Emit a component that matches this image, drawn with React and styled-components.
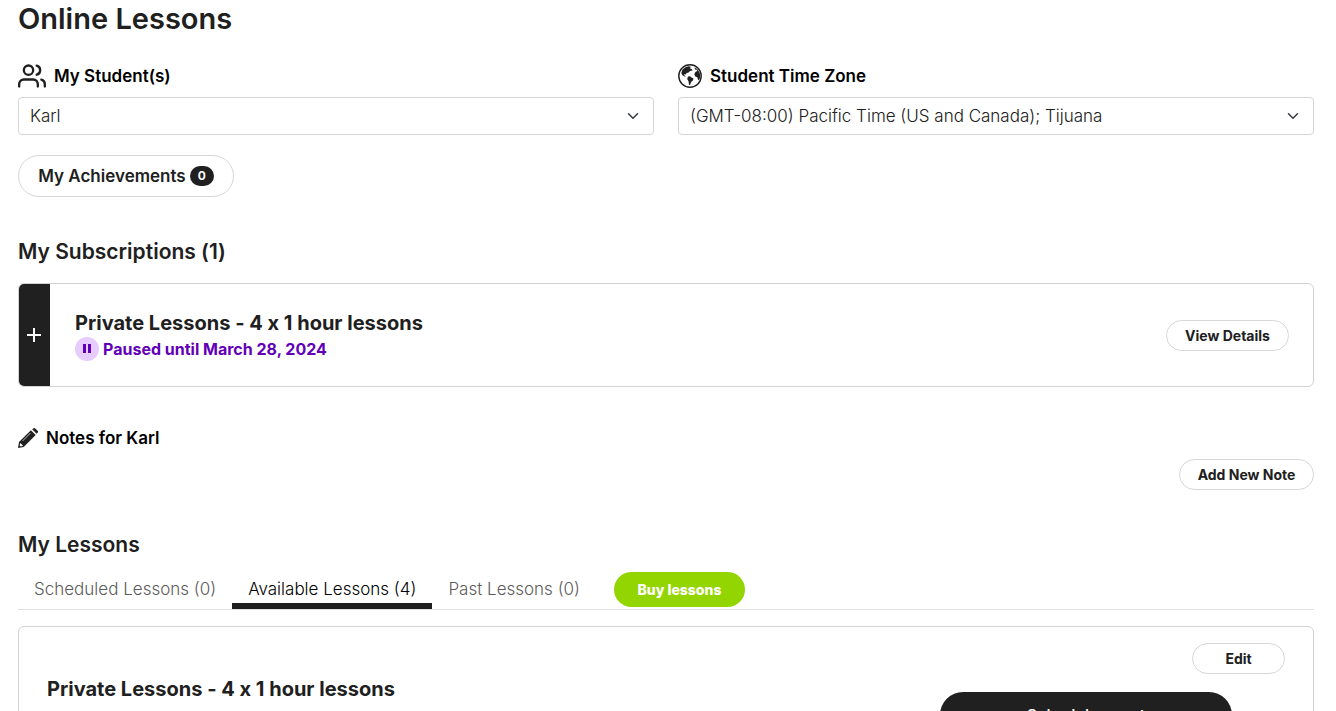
import React from 'react';
import styled, { createGlobalStyle, css } from 'styled-components';
import { FiUsers } from 'react-icons/fi';

const GlobalStyle = createGlobalStyle`
  * {
    box-sizing: border-box;
  }

  body {
    margin: 0;
    background: #fff;
    color: #202020;
    font-family: Inter, "Open Sans", sans-serif;
    font-size: 17px;
    font-weight: 300;
    font-feature-settings: "calt" 0;
    line-height: 24px;
    overflow-x: hidden;
  }

  button, select {
    font-family: inherit;
  }
`;

const Page = styled.main`
  padding: 0 22px 40px 18px;
`;

const PageTitle = styled.h1`
  margin: 0 0 24px;
  font-size: 29px;
  font-weight: 600;
  line-height: 38px;
`;

const SectionTitle = styled.h2`
  margin: 0;
  font-size: 21px;
  font-weight: 600;
  line-height: 28px;
`;

const Filters = styled.div`
  display: grid;
  grid-template-columns: 1fr 1fr;
  gap: 24px;
  margin-bottom: 20px;
`;

const IconLabel = styled.label`
  display: flex;
  align-items: center;
  gap: 8px;
  height: 28px;
  margin: 0 0 7px;
  color: #000;
  font-size: 17px;
  font-weight: 600;

  svg {
    color: #202020;
  }
`;

const SelectBox = styled.div`
  display: grid;
  align-items: center;

  > * {
    grid-area: 1 / 1;
  }

  svg {
    justify-self: end;
    margin-right: 15px;
    color: #343a40;
    pointer-events: none;
  }
`;

const Select = styled.select`
  appearance: none;
  width: 100%;
  height: 38px;
  padding: 0 36px 0 11px;
  border: 1px solid #d3d5d7;
  border-radius: 4px;
  background: #fff;
  color: #202020;
  font-size: 17px;
  font-weight: 300;
`;

const PillButton = styled.button`
  display: inline-flex;
  align-items: center;
  justify-content: center;
  gap: 4px;
  height: 31px;
  min-width: ${({ $width }) => $width || 0}px;
  padding: 0 16px;
  border: 1px solid #d5d7d9;
  border-radius: 24px;
  background: #fff;
  color: #202020;
  font-size: 14px;
  font-weight: 700;
  white-space: nowrap;
  cursor: pointer;

  ${({ $large }) =>
    $large &&
    css`
      height: 42px;
      font-size: 17px;
      font-weight: 600;
    `}
`;

const Badge = styled.span`
  padding: 0 8px;
  border-radius: 10px;
  background: #202020;
  color: #fff;
  font-size: 12px;
  font-weight: 700;
  line-height: 20px;
`;

const Subscriptions = styled.section`
  margin-top: 41px;
`;

const SubscriptionCard = styled.article`
  display: flex;
  align-items: center;
  height: 104px;
  margin-top: 17px;
  padding-right: 24px;
  border: 1px solid #d0d2d4;
  border-radius: 6px;
  overflow: hidden;
`;

const Expand = styled.button`
  display: flex;
  align-items: center;
  justify-content: center;
  align-self: stretch;
  width: 31px;
  padding: 0;
  border: 0;
  background: #202020;
  color: #fff;
  cursor: pointer;
`;

const SubscriptionInfo = styled.div`
  flex: 1;
  padding: 0 25px;
`;

const CardTitle = styled.h3`
  margin: 0;
  font-size: 20px;
  font-weight: 700;
  line-height: 28px;
`;

const Status = styled.p`
  display: flex;
  align-items: center;
  gap: 4px;
  margin: 0;
  color: #6200b8;
  font-size: 16px;
  font-weight: 700;
`;

const Notes = styled.section`
  display: flex;
  flex-direction: column;
  align-items: flex-end;
  margin-top: 37px;
`;

const NotesTitle = styled(IconLabel)`
  align-self: stretch;
`;

const Lessons = styled.section`
  margin-top: 41px;
`;

const Tabs = styled.div`
  display: flex;
  align-items: flex-end;
  height: 42px;
  margin: 9px 0 16px;
  border-bottom: 1px solid #dee0e2;
`;

const Tab = styled.button`
  height: 41px;
  padding: 6px 16px 0;
  border: 0;
  border-bottom: 6px solid ${({ $active }) => ($active ? '#202020' : 'transparent')};
  background: none;
  color: ${({ $active }) => ($active ? '#000' : '#5c5c5c')};
  font-size: 17px;
  font-weight: 300;
  white-space: nowrap;
  cursor: pointer;
`;

const BuyButton = styled.button`
  height: 35px;
  min-width: 131px;
  margin: 0 0 2px 18px;
  padding: 0 20px;
  border: 0;
  border-radius: 18px;
  background: #93d500;
  color: #fff;
  font-size: 14px;
  font-weight: 800;
  white-space: nowrap;
  cursor: pointer;
`;

const LessonCard = styled.article`
  display: flex;
  align-items: flex-start;
  justify-content: space-between;
  padding: 16px 28px 32px;
  border: 1px solid #d0d2d4;
  border-radius: 6px;
`;

const LessonInfo = styled.div`
  padding-top: 32px;
`;

const LessonActions = styled.div`
  display: flex;
  flex-direction: column;
  align-items: flex-end;
  gap: 18px;
`;

const ScheduleButton = styled.button`
  width: 292px;
  height: 46px;
  margin-right: 53px;
  border: 0;
  border-radius: 24px;
  background: #202020;
  color: #fff;
  font-size: 16px;
  font-weight: 500;
  cursor: pointer;
`;

const ChevronIcon = () => (
  <svg width="12" height="12" viewBox="0 0 16 16" fill="none" stroke="currentColor" strokeWidth="2" strokeLinecap="round" strokeLinejoin="round">
    <path d="m2 5 6 6 6-6" />
  </svg>
);

const GlobeIcon = () => (
  <svg width="24" height="24" viewBox="0 0 24 24" fill="currentColor">
    <circle cx="12" cy="12" r="11.2" fill="none" stroke="currentColor" strokeWidth="1.4" />
    <path d="M4.500 5.500 7.500 3.200l3-.9 2.500.4-1.300 1.600 2.100.7.700 1.500-2.500.6-1.400 1.500-2 .4-.7 1.400-1.300-.4-.6 1 1.500 1.200-.5.500-2.600-1.400L3.300 9z" />
    <path d="m10 12.600 2-.3 1.500 1.100 2 1-.6 2-1.600 1.400-1.200 2.900-1.100.3-.4-3.600-1.400-2.300z" />
    <path d="m16.500 3.400 2.500 1.400 2.600 3.600.7 3.500-.7 3.400-1.400.9-.9-3-2-.7-1-2.300 1.100-2.200 1.900-.9-.5-1.300-1.800-.3z" />
  </svg>
);

const PencilIcon = () => (
  <svg width="20" height="20" viewBox="0 0 20 20" fill="currentColor">
    <path d="M14.200 1.300 15.300.4a1.400 1.400 0 0 1 1.900 0l2.400 2.400a1.400 1.400 0 0 1 0 1.900l-1.100 1z" />
    <path d="M12.900 2.200 17.700 7 5.700 19 0 20l1-5.900z" />
    <path d="m2.300 15 2.800 2.800-2.300.6-1.200-1.200z" fill="#fff" />
    <path d="m4.500 13 8-8" stroke="#fff" strokeWidth=".7" />
  </svg>
);

const PlusIcon = () => (
  <svg width="16" height="16" viewBox="0 0 16 16" fill="none" stroke="currentColor" strokeWidth="2">
    <path d="M7 1v14M0 8h14" />
  </svg>
);

const PauseIcon = () => (
  <svg width="24" height="24" viewBox="0 0 24 24">
    <circle cx="12" cy="12" r="12" fill="#e6ccff" />
    <path d="M8 7h3v9H8zM13 7h3v9h-3z" fill="#6200b8" />
  </svg>
);

const App = () => {
  return (
    <>
      <GlobalStyle />
      <Page>
        <PageTitle>Online Lessons</PageTitle>

        <Filters>
          <div>
            <IconLabel htmlFor="student">
              <FiUsers size={28} />
              My Student(s)
            </IconLabel>
            <SelectBox>
              <Select id="student">
                <option>Karl</option>
              </Select>
              <ChevronIcon />
            </SelectBox>
          </div>
          <div>
            <IconLabel htmlFor="timezone">
              <GlobeIcon />
              Student Time Zone
            </IconLabel>
            <SelectBox>
              <Select id="timezone">
                <option>(GMT-08:00) Pacific Time (US and Canada); Tijuana</option>
              </Select>
              <ChevronIcon />
            </SelectBox>
          </div>
        </Filters>

        <PillButton $large $width={216}>
          My Achievements <Badge>0</Badge>
        </PillButton>

        <Subscriptions>
          <SectionTitle>My Subscriptions (1)</SectionTitle>
          <SubscriptionCard>
            <Expand aria-label="Expand">
              <PlusIcon />
            </Expand>
            <SubscriptionInfo>
              <CardTitle>Private Lessons - 4 x 1 hour lessons</CardTitle>
              <Status>
                <PauseIcon />
                Paused until March 28, 2024
              </Status>
            </SubscriptionInfo>
            <PillButton $width={123}>View Details</PillButton>
          </SubscriptionCard>
        </Subscriptions>

        <Notes>
          <NotesTitle as="h3">
            <PencilIcon />
            Notes for Karl
          </NotesTitle>
          <PillButton $width={135}>Add New Note</PillButton>
        </Notes>

        <Lessons>
          <SectionTitle>My Lessons</SectionTitle>
          <Tabs role="tablist">
            <Tab role="tab">Scheduled Lessons (0)</Tab>
            <Tab role="tab" aria-selected="true" $active>
              Available Lessons (4)
            </Tab>
            <Tab role="tab">Past Lessons (0)</Tab>
            <BuyButton>Buy lessons</BuyButton>
          </Tabs>
          <LessonCard>
            <LessonInfo>
              <CardTitle>Private Lessons - 4 x 1 hour lessons</CardTitle>
            </LessonInfo>
            <LessonActions>
              <PillButton $width={93}>Edit</PillButton>
              <ScheduleButton>Schedule event</ScheduleButton>
            </LessonActions>
          </LessonCard>
        </Lessons>
      </Page>
    </>
  );
};

export default App;
